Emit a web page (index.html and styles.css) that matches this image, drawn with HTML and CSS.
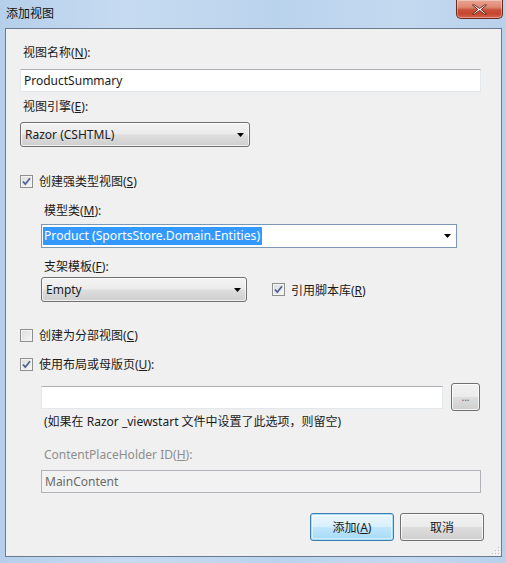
FILE: index.html
```html
<!DOCTYPE html>
<html lang="zh-CN">
<head>
<meta charset="utf-8">
<title>添加视图</title>
<link rel="stylesheet" href="styles.css">
</head>
<body>
<div class="window">
  <div class="titlebar">
    <span class="title">添加视图</span>
    <div class="close">
      <svg width="17" height="11" viewBox="0 0 17 11"><path d="M3.5 1 L8.5 4.5 L13.5 1 L15.5 1 L10.2 5.5 L15.5 10 L13.5 10 L8.5 6.5 L3.5 10 L1.5 10 L6.8 5.5 L1.5 1 Z" fill="#fff" stroke="#5a1e14" stroke-width="0.9" stroke-linejoin="round"/></svg>
    </div>
  </div>
  <div class="client">
    <div class="label l1">视图名称(<u>N</u>):</div>
    <div class="textbox tb1">ProductSummary</div>
    <div class="label l2">视图引擎(<u>E</u>):</div>
    <div class="select sel1"><span>Razor (CSHTML)</span><svg class="arrow" width="7" height="4" viewBox="0 0 7 4"><path d="M0 0 H7 L3.5 4 Z" fill="#000"/></svg></div>
    <div class="check-row cr1">
      <span class="checkbox"><svg width="13" height="13" viewBox="0 0 13 13"><path d="M3 6.5 L5.3 9.2 L10 3.2" fill="none" stroke="#4f6396" stroke-width="1.8"/></svg></span>
      <span>创建强类型视图(<u>S</u>)</span>
    </div>
    <div class="indent">
      <div class="label l3">模型类(<u>M</u>):</div>
      <div class="combo"><span class="sel-text">Product (SportsStore.Domain.Entities)</span><svg class="arrow" width="7" height="4" viewBox="0 0 7 4"><path d="M0 0 H7 L3.5 4 Z" fill="#000"/></svg></div>
      <div class="label l4">支架模板(<u>F</u>):</div>
      <div class="row scaffold-row">
        <div class="select sel2"><span>Empty</span><svg class="arrow" width="7" height="4" viewBox="0 0 7 4"><path d="M0 0 H7 L3.5 4 Z" fill="#000"/></svg></div>
        <div class="check-row cr2">
          <span class="checkbox"><svg width="13" height="13" viewBox="0 0 13 13"><path d="M3 6.5 L5.3 9.2 L10 3.2" fill="none" stroke="#4f6396" stroke-width="1.8"/></svg></span>
          <span>引用脚本库(<u>R</u>)</span>
        </div>
      </div>
    </div>
    <div class="check-row cr3">
      <span class="checkbox"></span>
      <span>创建为分部视图(<u>C</u>)</span>
    </div>
    <div class="check-row cr4">
      <span class="checkbox"><svg width="13" height="13" viewBox="0 0 13 13"><path d="M3 6.5 L5.3 9.2 L10 3.2" fill="none" stroke="#4f6396" stroke-width="1.8"/></svg></span>
      <span>使用布局或母版页(<u>U</u>):</span>
    </div>
    <div class="indent">
      <div class="row layout-row">
        <div class="textbox tb3"></div>
        <div class="btn browse">...</div>
      </div>
      <div class="hint">(如果在 Razor _viewstart 文件中设置了此选项，则留空)</div>
      <div class="label disabled l5">ContentPlaceHolder ID(<u>H</u>):</div>
      <div class="textbox tb-disabled">MainContent</div>
    </div>
    <div class="buttons">
      <div class="btn push default">添加(<u>A</u>)</div>
      <div class="btn push">取消</div>
    </div>
    <svg class="grip" width="8" height="8" viewBox="0 0 8 8">
      <g fill="#b8bcc2"><rect x="6" y="0" width="1" height="1"/><rect x="3" y="3" width="1" height="1"/><rect x="6" y="3" width="1" height="1"/><rect x="0" y="6" width="1" height="1"/><rect x="3" y="6" width="1" height="1"/><rect x="6" y="6" width="1" height="1"/></g>
      <g fill="#fff"><rect x="7" y="1" width="1" height="1"/><rect x="4" y="4" width="1" height="1"/><rect x="7" y="4" width="1" height="1"/><rect x="1" y="7" width="1" height="1"/><rect x="4" y="7" width="1" height="1"/><rect x="7" y="7" width="1" height="1"/></g>
    </svg>
  </div>
</div>
</body>
</html>
```

FILE: styles.css
```css
* { box-sizing: border-box; }
html, body { margin: 0; padding: 0; }
body {
  width: 506px;
  height: 563px;
  overflow: hidden;
  font-family: "Noto Sans", "Noto Sans CJK SC", sans-serif;
  font-size: 12px;
  color: #1b1b1b;
  background: #bcd4ec;
}
u { text-decoration: underline; text-underline-offset: 1px; }

.window {
  width: 506px;
  height: 563px;
  display: flex;
  flex-direction: column;
  padding: 0 4px 6px 5px;
  background: linear-gradient(90deg, #b5cfea 0%, #c6dbf1 25%, #bad3ec 55%, #c3d9f0 80%, #b8d0ea 100%);
}

.titlebar {
  height: 28px;
  flex: none;
  display: flex;
  align-items: flex-start;
  justify-content: space-between;
  position: relative;
}
.title {
  margin-top: 6px;
  margin-left: 1px;
  font-size: 12px;
  line-height: 16px;
  color: #111;
}
.close {
  width: 47px;
  height: 19px;
  margin-right: -1px;
  border: 1px solid #6b2a20;
  border-top: none;
  border-radius: 0 0 5px 5px;
  background: linear-gradient(180deg, #e9a594 0%, #de8872 40%, #c8513b 55%, #c4462f 75%, #d8644c 100%);
  box-shadow: inset 0 0 0 1px rgba(255,255,255,0.35);
  display: flex;
  align-items: center;
  justify-content: center;
}

.client {
  flex: 1;
  position: relative;
  background: #f0f0f0;
  border: 1px solid #6a7b90;
  padding: 16px 20px 0 14px;
}

.label {
  line-height: 16px;
  padding-left: 3px;
  white-space: nowrap;
}
.l1 { margin-top: 0; }
.l2 { margin-top: 7px; }
.l3 { margin-top: 14px; }
.l4 { margin-top: 11px; }
.l5 { margin-top: 17px; }
.disabled { color: #8e8e8e; }

.textbox {
  height: 23px;
  background: #fff;
  border: 1px solid #e2e7ec;
  border-top-color: #abadb3;
  padding: 0 3px;
  line-height: 21px;
  white-space: nowrap;
}
.tb1 { margin-top: 8px; }
.tb3 { width: 402px; height: 23px; }
.tb-disabled {
  margin-top: 7px;
  width: 440px;
  background: #f2f2f2;
  border: 1px solid #b0b4b8;
  color: #6a6a6a;
}

.select {
  height: 25px;
  border: 1px solid #707070;
  border-radius: 3px;
  background: linear-gradient(180deg, #f3f3f3 0%, #ebebeb 48%, #dddddd 52%, #cfcfcf 100%);
  box-shadow: inset 0 0 0 1px rgba(255,255,255,0.7);
  display: flex;
  align-items: center;
  justify-content: space-between;
  padding: 0 5px 0 4px;
  white-space: nowrap;
}
.sel1 { margin-top: 7px; width: 230px; }
.sel2 { width: 206px; }
.arrow { flex: none; }

.check-row {
  height: 16px;
  display: flex;
  align-items: center;
  white-space: nowrap;
}
.checkbox {
  width: 13px;
  height: 13px;
  flex: none;
  margin-right: 6px;
  border: 1px solid #8e8f8f;
  background: linear-gradient(135deg, #dcdcdc 0%, #f6f6f6 100%);
  box-shadow: inset 0 0 0 1px #f4f4f4;
  position: relative;
}
.checkbox svg { position: absolute; left: -1px; top: -1px; }
.cr1 { margin-top: 26px; }
.cr3 { margin-top: 25px; }
.cr4 { margin-top: 13px; }

.indent { margin-left: 21px; }

.combo {
  margin-top: 5px;
  width: 416px;
  height: 24px;
  background: #fff;
  border: 1px solid #7a98b6;
  display: flex;
  align-items: center;
  justify-content: space-between;
  padding: 0 5px 0 1px;
}
.sel-text {
  background: #3399ff;
  color: #fff;
  line-height: 18px;
  padding: 0 2px 0 1px;
  white-space: nowrap;
  font-size: 12.2px;
}

.row { display: flex; align-items: center; }
.scaffold-row { margin-top: 2px; height: 25px; }
.cr2 { margin-left: 25px; }

.layout-row { margin-top: 11px; height: 28px; }
.browse {
  margin-left: 8px;
  width: 29px;
  height: 28px;
  font-size: 10px;
  color: #555;
  line-height: 20px;
}

.btn {
  border: 1px solid #707070;
  border-radius: 3px;
  background: linear-gradient(180deg, #f2f2f2 0%, #ebebeb 48%, #dddddd 52%, #cfcfcf 100%);
  box-shadow: inset 0 0 0 1px rgba(255,255,255,0.75);
  display: flex;
  align-items: center;
  justify-content: center;
  white-space: nowrap;
}

.hint { margin-top: 3px; line-height: 16px; padding-left: 3px; white-space: nowrap; }

.buttons {
  margin-top: 20px;
  margin-right: -3px;
  display: flex;
  justify-content: flex-end;
  gap: 6px;
}
.push { width: 84px; height: 28px; }
.default {
  border-color: #3c7fb1;
  background: linear-gradient(180deg, #eaf6fd 0%, #d9f0fc 48%, #bee6fd 52%, #a7d9f5 100%);
  box-shadow: inset 0 0 0 1px #a9dcf5, inset 0 0 0 2px rgba(255,255,255,0.5);
}

.grip { position: absolute; right: 1px; bottom: 1px; }
```
